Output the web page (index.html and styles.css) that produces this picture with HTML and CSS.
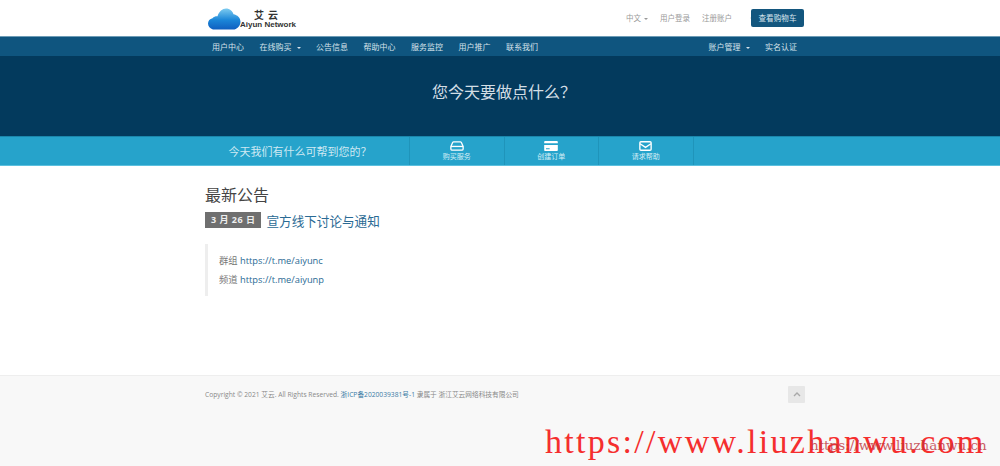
FILE: index.html
```html
<!DOCTYPE html>
<html lang="zh-CN">
<head>
    <meta charset="UTF-8">
    <title>艾云</title>
    <link rel="stylesheet" href="styles.css">
</head>
<body>
    <header class="top">
        <div class="wrap top-row">
            <a class="logo">
                <svg class="logo-cloud" width="33" height="22" viewBox="0 0 33 22">
                    <defs>
                        <linearGradient id="cloud" x1="0" y1="0" x2="0" y2="1">
                            <stop offset="0" stop-color="#7ccbf0"/>
                            <stop offset="0.55" stop-color="#1b86d8"/>
                            <stop offset="1" stop-color="#0f5fc0"/>
                        </linearGradient>
                    </defs>
                    <path d="M5 21.500C2 20.500 0 18.500 0 15.500c0-2.700 1.800-4.800 4.500-5.300C6 8.500 7.800 8 9.500 8.200 11 3.500 14.500 .5 18 .5c3.800 0 6.500 2.500 7.500 5.700 3.800.6 7 3.600 7 7.600 0 3.700-2.500 6.500-6 7.700z" fill="url(#cloud)"/>
                </svg>
                <span class="logo-text">
                    <span class="logo-cn">艾云</span>
                    <span class="logo-en">Aiyun Network</span>
                </span>
            </a>
            <nav class="top-links">
                <a>中文<i class="caret"></i></a>
                <a>用户登录</a>
                <a>注册账户</a>
                <a class="cart-btn">查看购物车</a>
            </nav>
        </div>
    </header>

    <nav class="main-nav">
        <div class="wrap nav-row">
            <ul class="nav-list">
                <li>用户中心</li>
                <li>在线购买<i class="caret"></i></li>
                <li>公告信息</li>
                <li>帮助中心</li>
                <li>服务监控</li>
                <li>用户推广</li>
                <li>联系我们</li>
            </ul>
            <ul class="nav-list">
                <li>账户管理<i class="caret"></i></li>
                <li>实名认证</li>
            </ul>
        </div>
    </nav>

    <section class="hero">
        <h1>您今天要做点什么？</h1>
    </section>

    <section class="shortcuts">
        <div class="wrap shortcuts-row">
            <div class="shortcuts-title">今天我们有什么可帮到您的？</div>
            <a class="shortcut">
                <svg width="14" height="10" viewBox="0 0 16 11" fill="none" stroke="#fff" stroke-width="1.500">
                    <path d="M1 6l2-4.500C3.300 1 3.700.8 4.200.8h7.600c.5 0 .9.2 1.200.7L15 6v3c0 .7-.4 1.200-1 1.200H2c-.6 0-1-.5-1-1.200z"/>
                    <path d="M1 6h14"/>
                </svg>
                <span>购买服务</span>
            </a>
            <a class="shortcut">
                <svg width="14" height="10" viewBox="0 0 15 11">
                    <path d="M0 1.200C0 .5.500 0 1.200 0h12.600c.7 0 1.200.5 1.200 1.200V2.500H0zM0 4.500h15v5.300c0 .7-.5 1.200-1.200 1.200H1.200C.5 11 0 10.500 0 9.800zm2 3.500v1h4V8z" fill="#fff" fill-rule="evenodd"/>
                </svg>
                <span>创建订单</span>
            </a>
            <a class="shortcut">
                <svg width="13" height="10" viewBox="0 0 14 11" fill="none" stroke="#fff" stroke-width="1.500">
                    <rect x=".8" y=".8" width="12.400" height="9.400" rx="1.200"/>
                    <path d="M1 3l6 4 6-4"/>
                </svg>
                <span>请求帮助</span>
            </a>
        </div>
    </section>

    <main class="wrap content">
        <h2>最新公告</h2>
        <div class="notice-head">
            <span class="date-label">3 月 26 日</span>
            <a class="notice-title">宣方线下讨论与通知</a>
        </div>
        <blockquote class="notice-body">
            <p>群组 <a>https://t.me/aiyunc</a></p>
            <p>频道 <a>https://t.me/aiyunp</a></p>
        </blockquote>
    </main>

    <footer class="footer">
        <div class="wrap footer-row">
            <p>Copyright © 2021 艾云. All Rights Reserved. <a>浙ICP备2020039381号-1</a> 隶属于 浙江艾云网络科技有限公司</p>
            <a class="back-top">
                <svg width="8" height="5" viewBox="0 0 8 5" fill="none" stroke="#a8a8a8" stroke-width="1.400"><path d="M1 4l3-3 3 3"/></svg>
            </a>
        </div>
        <div class="watermark">
            <span class="mark-big">https://www.liuzhanwu.com</span>
            <span class="mark-small">https://www.liuzhanwu.cn</span>
        </div>
    </footer>
</body>
</html>
```

FILE: styles.css
```css
* {
    box-sizing: border-box;
}
html, body {
    height: 100%;
}
body {
    margin: 0;
    display: flex;
    flex-direction: column;
    font-family: "Open Sans", "Noto Sans CJK SC", sans-serif;
    color: #58595b;
    background-color: #fff;
    overflow: hidden;
}
ul {
    list-style: none;
    margin: 0;
    padding: 0;
}
a {
    color: #2a6a94;
    text-decoration: none;
}
.wrap {
    width: 600px;
    margin-left: 205px;
}

/* 顶部 */
.top {
    height: 36px;
    flex: none;
}
.top-row {
    height: 36px;
    display: flex;
    align-items: center;
    justify-content: space-between;
}
.logo {
    display: flex;
    align-items: flex-end;
    margin: 1px 0 0 3px;
}
.logo-cloud {
    display: block;
}
.logo-text {
    display: flex;
    flex-direction: column;
    align-items: center;
    margin-left: -1px;
    color: #333;
}
.logo-cn {
    font-family: "Noto Sans CJK SC", sans-serif;
    font-size: 10px;
    font-weight: 700;
    line-height: 11px;
    letter-spacing: 4px;
}
.logo-en {
    font-family: "Liberation Sans", sans-serif;
    font-size: 8px;
    font-weight: 700;
    line-height: 10px;
}
.top-links {
    display: flex;
    align-items: center;
    font-size: 7.500px;
    margin-right: 1px;
}
.top-links a {
    color: #999;
    margin-left: 12px;
    padding-bottom: 1px;
}
.top-links .cart-btn {
    margin-left: 19px;
    padding: 0 7.500px;
    height: 18px;
    line-height: 18px;
    font-size: 7.600px;
    color: #d8e6ee;
    background-color: #13567e;
    border-radius: 2px;
    box-shadow: -9px 0 0 -8px #eee;
}
.caret {
    display: inline-block;
    margin-left: 3px;
    vertical-align: middle;
    border-top: 2px solid;
    border-left: 2px solid transparent;
    border-right: 2px solid transparent;
}

/* 主导航 */
.main-nav {
    height: 20px;
    flex: none;
    background-color: #0f557f;
    border-top: 1px solid #6d9cb6;
}
.nav-row {
    display: flex;
    justify-content: space-between;
    height: 19px;
}
.nav-list {
    display: flex;
    align-items: center;
    font-size: 8px;
    color: #d5e2ea;
    padding: 0 8px 0 7px;
    gap: 15.500px;
}
.nav-list .caret {
    margin-left: 5px;
}

/* 标题区 */
.hero {
    height: 80px;
    flex: none;
    background-color: #033a5d;
    padding: 25px 0 0 8px;
}
.hero h1 {
    margin: 0;
    text-align: center;
    font-size: 16px;
    font-weight: 400;
    line-height: 22px;
    color: #d3dee5;
}
.shortcuts {
    height: 30px;
    flex: none;
    background-color: #26a3cb;
    border-top: 1px solid #1b86ab;
    border-bottom: 1px solid #5cc0de;
}
.shortcuts-row {
    display: flex;
    height: 100%;
}
.shortcuts-title {
    width: 205px;
    padding-right: 14px;
    font-family: "Noto Sans CJK SC", sans-serif;
    font-size: 11px;
    line-height: 29px;
    text-align: center;
    color: #cfe9f3;
    border-right: 1px solid #1f94ba;
}
.shortcut {
    width: 94.500px;
    display: flex;
    flex-direction: column;
    align-items: center;
    padding-top: 4px;
    gap: 1px;
    font-size: 7px;
    line-height: 9px;
    color: #d5eef6;
    border-right: 1px solid #1f94ba;
}

/* 公告 */
.content {
    flex: 1;
    padding-top: 19px;
}
.content h2 {
    margin: 0;
    font-size: 16px;
    font-weight: 400;
    line-height: 20px;
    color: #444;
}
.notice-head {
    display: flex;
    align-items: center;
    margin-top: 5px;
    height: 20px;
}
.date-label {
    height: 16px;
    padding: 0 6px;
    background-color: #6f6f6f;
    color: #eee;
    font-size: 9px;
    font-weight: 700;
    line-height: 16px;
    letter-spacing: .5px;
}
.notice-title {
    margin-left: 5px;
    font-size: 12.600px;
    color: #2a6a94;
}
.notice-body {
    margin: 14px 0 0;
    padding: 7px 0 5px 11px;
    width: 300px;
    height: 52px;
    border-left: 3px solid #eee;
    font-size: 9.300px;
    line-height: 19px;
    color: #777;
}
.notice-body p {
    margin: 0;
}

/* 页脚 */
.footer {
    position: relative;
    height: 91px;
    flex: none;
    background-color: #f8f8f8;
    border-top: 1px solid #eee;
}
.footer-row {
    display: flex;
    align-items: center;
    justify-content: space-between;
    padding-top: 10px;
}
.footer-row p {
    margin: 0 0 2px;
    font-size: 6.700px;
    color: #888;
}
.footer-row a {
    color: #3a7ba5;
}
.back-top {
    display: flex;
    align-items: center;
    justify-content: center;
    width: 17px;
    height: 17px;
    border-radius: 1px;
    background-color: #e7e7e7;
}
.watermark {
    position: absolute;
    left: 545px;
    top: 45px;
    white-space: nowrap;
    font-family: "Liberation Serif", serif;
    color: #f52e2e;
}
.mark-big {
    font-size: 34px;
    line-height: 42px;
    letter-spacing: 2.300px;
}
.mark-small {
    position: absolute;
    left: 265px;
    top: 16px;
    font-family: "DejaVu Serif", serif;
    font-size: 13.500px;
    color: #c0343c;
    opacity: .8;
}
```
